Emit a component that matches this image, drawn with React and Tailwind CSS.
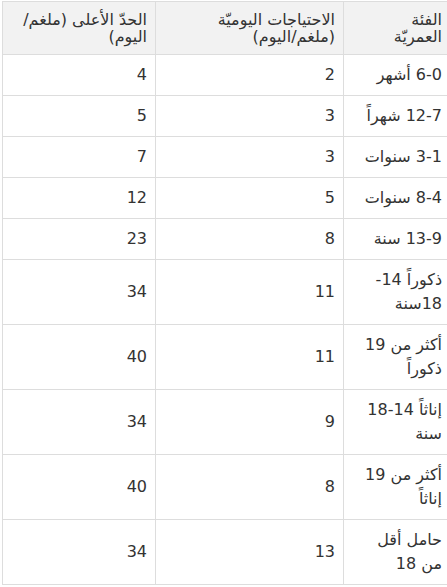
import React from "react";

const rows = [
  ["6-0 أشهر", "2", "4"],
  ["12-7 شهراً", "3", "5"],
  ["3-1 سنوات", "3", "7"],
  ["8-4 سنوات", "5", "12"],
  ["13-9 سنة", "8", "23"],
  ["ذكوراً 14-18سنة", "11", "34"],
  ["أكثر من 19 ذكوراً", "11", "40"],
  ["إناثاً 14-18 سنة", "9", "34"],
  ["أكثر من 19 إناثاً", "8", "40"],
  ["حامل أقل من 18", "13", "34"],
];

const th =
  "border border-[#dddddd] px-2 py-[9px] text-right font-normal align-top leading-[17px]";

export default function App() {
  return (
    <div
      className="w-[447px] h-[587px] overflow-hidden bg-white text-[#333]"
      style={{ fontFamily: '"DejaVu Sans", sans-serif' }}
    >
      <div className="pt-[1px] pl-[2px]">
        <table dir="rtl" className="border-collapse w-[449px] table-fixed text-[16px]">
          <colgroup>
            <col className="w-[107px]" />
            <col className="w-[188px]" />
            <col className="w-[153px]" />
          </colgroup>
          <thead>
            <tr className="bg-[#f2f2f2]">
              <th className={th}>
                الفئة
                <br />
                العمريّة
              </th>
              <th className={th}>
                الاحتياجات اليوميّة
                <br />
                (ملغم/اليوم)
              </th>
              <th className={th}>
                الحدّ الأعلى (ملغم/
                <br />
                اليوم)
              </th>
            </tr>
          </thead>
          <tbody>
            {rows.map((r, i) => (
              <tr key={i}>
                {r.map((c, j) => (
                  <td
                    key={j}
                    className="border border-[#dddddd] px-2 py-2 text-right align-middle leading-[24px]"
                  >
                    {c}
                  </td>
                ))}
              </tr>
            ))}
          </tbody>
        </table>
      </div>
    </div>
  );
}
